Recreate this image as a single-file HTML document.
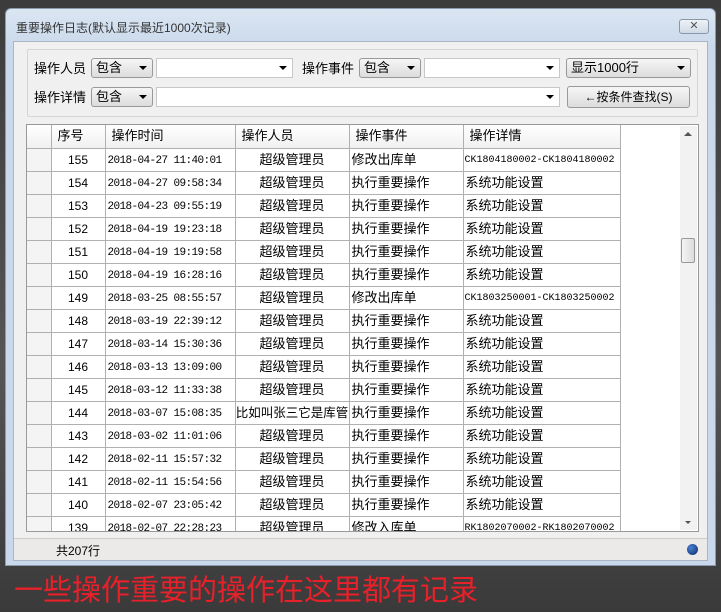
<!DOCTYPE html>
<html><head><meta charset="utf-8"><style>
*{margin:0;padding:0;box-sizing:border-box}
body{width:721px;height:612px;overflow:hidden;background:linear-gradient(180deg,#3c3c3c,#555 60%,#3a3a3a);font-family:"Liberation Sans","Noto Sans CJK SC",sans-serif;font-size:12px;position:relative;color:#000}
.win{position:absolute;left:5px;top:8px;width:711px;height:558px;border:1px solid #8a9bb0;border-radius:6px 6px 0 0;background:linear-gradient(180deg,#dbe6f3,#c9d8ea 40px);}
.title{position:absolute;left:10px;top:10px;font-size:12px;color:#333}
.close{position:absolute;right:6px;top:10px;width:30px;height:15px;border:1px solid #8a97a8;border-radius:3px;background:linear-gradient(#eef2f7,#cfd9e6);font-size:11px;text-align:center;line-height:13px;color:#555}
.client{position:absolute;left:7px;top:32px;width:695px;height:520px;background:#f0f0f0;border:1px solid #a9b6c6}
.grp{position:absolute;left:13px;top:7px;width:671px;height:68px;border:1px solid #d5d5d5;border-radius:2px}
.lbl{position:absolute;font-size:13px}
.cb{position:absolute;height:20px;border:1px solid #999;border-radius:3px;background:linear-gradient(#f6f6f6,#dcdcdc);font-size:13px;padding-left:4px;line-height:18px}
.ed{position:absolute;height:20px;border:1px solid #c8c8c8;background:#fff}
.arr{position:absolute;right:5px;top:7px;width:0;height:0;border-left:4px solid transparent;border-right:4px solid transparent;border-top:4px solid #000}
.grid{position:absolute;left:12px;top:82px;width:673px;height:408px;border:1px solid #999;background:#fff;overflow:hidden}
table{border-collapse:collapse;position:absolute;left:0;top:0;font-size:12px;table-layout:fixed;width:593px}
td{height:23px;line-height:22px;border-right:1px solid #b0b0b0;border-bottom:1px solid #b0b0b0;white-space:nowrap;overflow:hidden;padding:0 2px;vertical-align:middle}
tr.h td{background:linear-gradient(#fff,#f0f0f0);height:23px;font-size:13px;padding-left:6px}
td.rn{background:#f4f4f4}
td.n{text-align:center}
td.t{font-family:"Liberation Mono",monospace;font-size:11px;letter-spacing:-0.6px;padding-top:2px;line-height:20px}
td.p{text-align:center;font-size:13px;padding:0}
td.e{font-size:13px}
td.d{font-size:13px}
td.d.m{font-family:"Liberation Mono",monospace;font-size:10px;padding:2px 1px 0;line-height:20px}
.sb{position:absolute;right:1px;top:1px;width:17px;height:404px;background:#f2f2f2}
.thumb{position:absolute;left:1px;top:112px;width:14px;height:25px;border:1px solid #999;border-radius:2px;background:linear-gradient(90deg,#f4f4f4,#dcdcdc)}
.status{position:absolute;left:0;top:496px;width:693px;height:22px;background:#ece9e9;border-top:1px solid #ccc;font-size:12px}
.red{position:absolute;left:14px;top:569px;color:#e8202a;font-size:29px;font-family:"Noto Sans CJK SC",sans-serif;line-height:38px}
</style></head><body>
<div class="win">
<div class="title">重要操作日志(默认显示最近1000次记录)</div>
<div class="close">✕</div>
<div class="client">
<div class="grp">
<div class="lbl" style="left:6px;top:8px">操作人员</div>
<div class="cb" style="left:63px;top:8px;width:62px">包含<div class="arr"></div></div>
<div class="ed" style="left:128px;top:8px;width:137px"><div class="arr"></div></div>
<div class="lbl" style="left:274px;top:8px">操作事件</div>
<div class="cb" style="left:331px;top:8px;width:62px">包含<div class="arr"></div></div>
<div class="ed" style="left:396px;top:8px;width:136px"><div class="arr"></div></div>
<div class="cb" style="left:538px;top:8px;width:125px">显示1000行<div class="arr"></div></div>
<div class="lbl" style="left:6px;top:37px">操作详情</div>
<div class="cb" style="left:63px;top:37px;width:62px">包含<div class="arr"></div></div>
<div class="ed" style="left:128px;top:37px;width:404px"><div class="arr"></div></div>
<div class="cb" style="left:539px;top:36px;width:123px;height:22px;text-align:center;padding:0;line-height:20px;font-size:12px">←按条件查找(S)</div>
</div>
<div class="grid">
<table>
<colgroup><col style="width:24px"><col style="width:54px"><col style="width:130px"><col style="width:114px"><col style="width:114px"><col style="width:157px"></colgroup>
<tr class="h"><td class="rn" style="padding:0"></td><td class="n" style="text-align:left">序号</td><td style="font-size:13px">操作时间</td><td class="p" style="text-align:left;padding-left:6px">操作人员</td><td class="e">操作事件</td><td class="d">操作详情</td></tr>
<tr><td class="rn"></td><td class="n">155</td><td class="t">2018-04-27 11:40:01</td><td class="p">超级管理员</td><td class="e">修改出库单</td><td class="d m">CK1804180002-CK1804180002</td></tr>
<tr><td class="rn"></td><td class="n">154</td><td class="t">2018-04-27 09:58:34</td><td class="p">超级管理员</td><td class="e">执行重要操作</td><td class="d">系统功能设置</td></tr>
<tr><td class="rn"></td><td class="n">153</td><td class="t">2018-04-23 09:55:19</td><td class="p">超级管理员</td><td class="e">执行重要操作</td><td class="d">系统功能设置</td></tr>
<tr><td class="rn"></td><td class="n">152</td><td class="t">2018-04-19 19:23:18</td><td class="p">超级管理员</td><td class="e">执行重要操作</td><td class="d">系统功能设置</td></tr>
<tr><td class="rn"></td><td class="n">151</td><td class="t">2018-04-19 19:19:58</td><td class="p">超级管理员</td><td class="e">执行重要操作</td><td class="d">系统功能设置</td></tr>
<tr><td class="rn"></td><td class="n">150</td><td class="t">2018-04-19 16:28:16</td><td class="p">超级管理员</td><td class="e">执行重要操作</td><td class="d">系统功能设置</td></tr>
<tr><td class="rn"></td><td class="n">149</td><td class="t">2018-03-25 08:55:57</td><td class="p">超级管理员</td><td class="e">修改出库单</td><td class="d m">CK1803250001-CK1803250002</td></tr>
<tr><td class="rn"></td><td class="n">148</td><td class="t">2018-03-19 22:39:12</td><td class="p">超级管理员</td><td class="e">执行重要操作</td><td class="d">系统功能设置</td></tr>
<tr><td class="rn"></td><td class="n">147</td><td class="t">2018-03-14 15:30:36</td><td class="p">超级管理员</td><td class="e">执行重要操作</td><td class="d">系统功能设置</td></tr>
<tr><td class="rn"></td><td class="n">146</td><td class="t">2018-03-13 13:09:00</td><td class="p">超级管理员</td><td class="e">执行重要操作</td><td class="d">系统功能设置</td></tr>
<tr><td class="rn"></td><td class="n">145</td><td class="t">2018-03-12 11:33:38</td><td class="p">超级管理员</td><td class="e">执行重要操作</td><td class="d">系统功能设置</td></tr>
<tr><td class="rn"></td><td class="n">144</td><td class="t">2018-03-07 15:08:35</td><td class="p" style="font-size:12.5px">比如叫张三它是库管</td><td class="e">执行重要操作</td><td class="d">系统功能设置</td></tr>
<tr><td class="rn"></td><td class="n">143</td><td class="t">2018-03-02 11:01:06</td><td class="p">超级管理员</td><td class="e">执行重要操作</td><td class="d">系统功能设置</td></tr>
<tr><td class="rn"></td><td class="n">142</td><td class="t">2018-02-11 15:57:32</td><td class="p">超级管理员</td><td class="e">执行重要操作</td><td class="d">系统功能设置</td></tr>
<tr><td class="rn"></td><td class="n">141</td><td class="t">2018-02-11 15:54:56</td><td class="p">超级管理员</td><td class="e">执行重要操作</td><td class="d">系统功能设置</td></tr>
<tr><td class="rn"></td><td class="n">140</td><td class="t">2018-02-07 23:05:42</td><td class="p">超级管理员</td><td class="e">执行重要操作</td><td class="d">系统功能设置</td></tr>
<tr><td class="rn"></td><td class="n">139</td><td class="t">2018-02-07 22:28:23</td><td class="p">超级管理员</td><td class="e">修改入库单</td><td class="d m">RK1802070002-RK1802070002</td></tr>
</table>
<div class="sb"><div style="position:absolute;left:4px;top:6px;border-left:4px solid transparent;border-right:4px solid transparent;border-bottom:4px solid #555"></div><div class="thumb"></div><div style="position:absolute;left:5px;bottom:6px;border-left:3px solid transparent;border-right:3px solid transparent;border-top:3px solid #555"></div></div>
</div>
<div class="status"><span style="position:absolute;left:42px;top:3px">共207行</span><span style="position:absolute;right:9px;top:5px;width:11px;height:11px;border-radius:50%;background:radial-gradient(circle at 35% 35%,#4a7fd0,#0a2a6a)"></span></div>
</div>
</div>
<div class="red">一些操作重要的操作在这里都有记录</div>
</body></html>
